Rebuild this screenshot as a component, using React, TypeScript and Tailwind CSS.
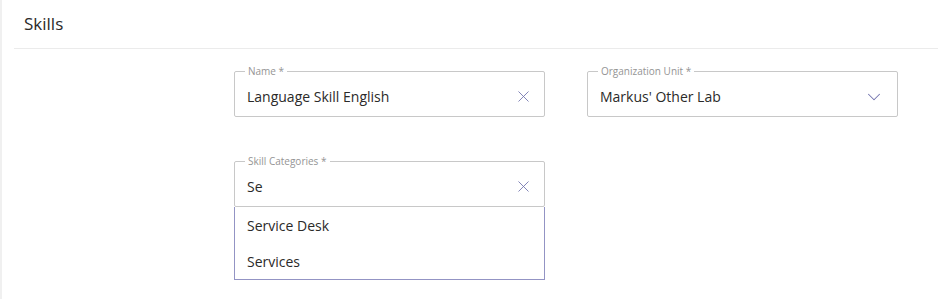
import { X, ChevronDown } from "lucide-react";

const font = { fontFamily: '"Open Sans", "Noto Sans", sans-serif' };

function Field({ label, value, icon }: { label: string; value: string; icon: "clear" | "chevron" }) {
  return (
    <fieldset className="h-[52px] w-[311px] border border-[#c8c8c8] rounded-[2px] pl-[12px] pr-[12px] flex items-center">
      <legend className="-ml-[2px] px-[3px] text-[10px] leading-[12px] text-[#949494]">{label}</legend>
      <div className="flex items-center justify-between w-full">
        <span className="text-[14px] text-[#2b2a29]">{value}</span>
        {icon === "clear" ? (
          <X size={19} strokeWidth={1.1} className="text-[#7173ad] -mr-[1px]" />
        ) : (
          <ChevronDown size={22} strokeWidth={1.1} className="text-[#7173ad]" />
        )}
      </div>
    </fieldset>
  );
}

export default function App() {
  return (
    <div className="w-[938px] h-[299px] bg-white border-l-2 border-[#f0f0f0] overflow-hidden" style={font}>
      <div className="ml-[12px] h-[49px] border-b border-[#ebebeb] flex items-center pl-[10px]">
        <h1 className="text-[17px] text-[#2b2a29] -mt-[1px]">Skills</h1>
      </div>

      <div className="pl-[232px] pt-[16px]">
        <div className="flex gap-[42px]">
          <Field label="Name *" value="Language Skill English" icon="clear" />
          <Field label="Organization Unit *" value="Markus' Other Lab" icon="chevron" />
        </div>

        <div className="mt-[38px] w-[311px]">
          <Field label="Skill Categories *" value="Se" icon="clear" />
          <div className="border border-[#9394c4] border-t-0">
            <div className="h-[36px] flex items-center px-[12px] text-[14px] text-[#2b2a29]">Service Desk</div>
            <div className="h-[36px] flex items-center px-[12px] text-[14px] text-[#2b2a29]">Services</div>
          </div>
        </div>
      </div>
    </div>
  );
}
